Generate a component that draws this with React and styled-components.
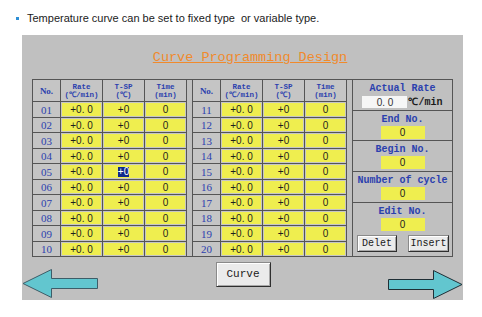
import React from "react";
import styled, { createGlobalStyle } from "styled-components";

const Global = createGlobalStyle`
  html, body { margin: 0; padding: 0; background: #fff; }
  body { width: 482px; height: 317px; overflow: hidden; }
  * { box-sizing: border-box; }
`;

const YELLOW = "#efee4f";
const LINE = "#555";
const BLUE = "#2b3fae";
const GRAY = "#c0c0c0";

const Page = styled.div`
  width: 482px;
  height: 317px;
  display: flex;
  flex-direction: column;
`;

const Caption = styled.div`
  height: 35px;
  padding: 12px 0 0 16px;
  display: flex;
  align-items: flex-start;
  gap: 8px;
  font: 11px/13px "Liberation Sans", Arial, sans-serif;
  color: #1b1b1b;
  white-space: pre;
`;

const Bullet = styled.span`
  width: 3px;
  height: 3px;
  margin-top: 5px;
  background: #2d8fd6;
`;

const Panel = styled.div`
  margin-left: 22px;
  width: 441px;
  height: 265px;
  background: ${GRAY};
  padding-top: 15px;
  display: flex;
  flex-direction: column;
`;

const Title = styled.div`
  text-align: center;
  padding-left: 15px;
  font: 13.5px/16px "Liberation Mono", monospace;
  color: #f08a2c;
  text-decoration: underline;
  text-underline-offset: 1px;
  margin-bottom: 13px;
`;

const Board = styled.div`
  margin: 0 10px;
  height: 178px;
  border: 1px solid ${LINE};
  display: flex;
`;

const DataGrid = styled.div`
  display: grid;
  grid-template-columns: 28px 42px 42px 42px;
  grid-template-rows: 21px repeat(5, 16px 15px);
`;

const Gap = styled.div`
  width: 6px;
  border-right: 1px solid ${LINE};
`;

const Cell = styled.div`
  border-right: 1px solid ${LINE};
  border-top: ${(p) => (p.$head ? "none" : `1px solid ${LINE}`)};
  background: #c5c5c5;
  padding: ${(p) => (p.$fill ? "1px" : "0")};
  display: flex;
  flex-direction: column;
  align-items: center;
  justify-content: center;
  color: ${BLUE};
`;

const HeadNo = styled.span`
  font: bold 9px/10px "Liberation Serif", serif;
`;

const HeadText = styled.span`
  font: bold 7.5px/8px "Liberation Mono", monospace;
  white-space: pre;
`;

const RowNo = styled.span`
  font: 11px/12px "Liberation Serif", serif;
`;

const Value = styled.div`
  width: 100%;
  height: 100%;
  background: ${YELLOW};
  display: flex;
  align-items: center;
  justify-content: center;
  font: 10px/11px "Liberation Sans", Arial, sans-serif;
  color: #1e1e1e;
  white-space: pre;
`;

const Selected = styled.span`
  background: #10298a;
  color: #fff;
  line-height: 10px;
`;

const Side = styled.div`
  width: 99px;
  display: flex;
  flex-direction: column;
`;

const Section = styled.div`
  height: ${(p) => (p.$h ? `${p.$h}px` : "auto")};
  flex: ${(p) => (p.$h ? "none" : "1")};
  border-bottom: ${(p) => (p.$last ? "none" : `1px solid ${LINE}`)};
  padding-top: 3px;
  display: flex;
  flex-direction: column;
  align-items: center;
  gap: 1px;
`;

const Label = styled.div`
  font: bold 10px/11px "Liberation Mono", monospace;
  color: ${BLUE};
  white-space: pre;
`;

const RateRow = styled.div`
  display: flex;
  align-items: center;
  gap: 1px;
  margin-top: 1px;
`;

const WhiteBox = styled.div`
  width: 45px;
  height: 12px;
  background: #f6f6f6;
  display: flex;
  align-items: center;
  justify-content: center;
  font: 10px/11px "Liberation Sans", Arial, sans-serif;
  color: #333;
  white-space: pre;
`;

const Unit = styled.span`
  font: bold 10px/11px "Liberation Mono", monospace;
  color: #1a1a1a;
`;

const YellowBox = styled.div`
  width: 44px;
  height: 13px;
  background: ${YELLOW};
  display: flex;
  align-items: center;
  justify-content: center;
  font: 10px/11px "Liberation Sans", Arial, sans-serif;
  color: #222;
`;

const ButtonRow = styled.div`
  align-self: stretch;
  display: flex;
  justify-content: space-between;
  padding: 0 3px 0 4px;
  margin-top: 3px;
`;

const Button = styled.div`
  width: ${(p) => p.$w}px;
  height: ${(p) => p.$h}px;
  background: #ebebeb;
  border: 1px solid;
  border-color: #8a8a8a #2e2e2e #2e2e2e #8a8a8a;
  box-shadow: inset 1px 1px #fff, inset -1px -1px #a8a8a8;
  display: flex;
  align-items: center;
  justify-content: center;
  font: ${(p) => p.$fs}px/1 "Liberation Mono", monospace;
  color: #1a1a1a;
`;

const BottomRow = styled.div`
  margin-top: 5px;
  display: flex;
  justify-content: space-between;
  align-items: flex-start;
`;

const ArrowSvg = styled.svg`
  display: block;
  margin-top: ${(p) => p.$top}px;
`;

const LeftArrow = () => (
  <ArrowSvg $top={7} width="76" height="30" viewBox="0 0 76 30">
    <polygon
      points="1,14.5 29.5,0.5 29.5,9.5 75.5,9.5 75.5,19.5 29.5,19.5 29.5,28.5"
      fill="#62c6cf"
      stroke="#3d5d68"
      strokeWidth="1"
    />
  </ArrowSvg>
);

const RightArrow = () => (
  <ArrowSvg $top={8} width="75" height="30" viewBox="0 0 75 30">
    <polygon
      points="0.5,9.5 45.5,9.5 45.5,0.5 74,14.5 45.5,28.5 45.5,19.5 0.5,19.5"
      fill="#62c6cf"
      stroke="#1f2f36"
      strokeWidth="1"
    />
  </ArrowSvg>
);

const pad = (n) => String(n).padStart(2, "0");

const Table = ({ start }) => {
  const rows = Array.from({ length: 10 }, (_, i) => start + i);
  return (
    <DataGrid>
      <Cell $head>
        <HeadNo>No.</HeadNo>
      </Cell>
      <Cell $head>
        <HeadText>Rate</HeadText>
        <HeadText>(℃/min)</HeadText>
      </Cell>
      <Cell $head>
        <HeadText>T-SP</HeadText>
        <HeadText>(℃)</HeadText>
      </Cell>
      <Cell $head>
        <HeadText>Time</HeadText>
        <HeadText>(min)</HeadText>
      </Cell>
      {rows.map((n) => (
        <React.Fragment key={n}>
          <Cell>
            <RowNo>{pad(n)}</RowNo>
          </Cell>
          <Cell $fill>
            <Value>+0. 0</Value>
          </Cell>
          <Cell $fill>
            <Value>{n === 5 ? <Selected>+0</Selected> : "+0"}</Value>
          </Cell>
          <Cell $fill>
            <Value>0</Value>
          </Cell>
        </React.Fragment>
      ))}
    </DataGrid>
  );
};

export default function App() {
  return (
    <Page>
      <Global />
      <Caption>
        <Bullet />
        <span>Temperature curve can be set to fixed type  or variable type.</span>
      </Caption>
      <Panel>
        <Title>Curve Programming Design</Title>
        <Board>
          <Table start={1} />
          <Gap />
          <Table start={11} />
          <Gap />
          <Side>
            <Section $h={31}>
              <Label>Actual Rate</Label>
              <RateRow>
                <WhiteBox>0. 0</WhiteBox>
                <Unit>℃/min</Unit>
              </RateRow>
            </Section>
            <Section $h={30}>
              <Label>End No.</Label>
              <YellowBox>0</YellowBox>
            </Section>
            <Section $h={31}>
              <Label>Begin No.</Label>
              <YellowBox>0</YellowBox>
            </Section>
            <Section $h={31}>
              <Label>Number of cycle</Label>
              <YellowBox>0</YellowBox>
            </Section>
            <Section $last>
              <Label>Edit No.</Label>
              <YellowBox>0</YellowBox>
              <ButtonRow>
                <Button $w={40} $h={17} $fs={10}>Delet</Button>
                <Button $w={41} $h={17} $fs={10}>Insert</Button>
              </ButtonRow>
            </Section>
          </Side>
        </Board>
        <BottomRow>
          <LeftArrow />
          <Button $w={55} $h={25} $fs={11}>Curve</Button>
          <RightArrow />
        </BottomRow>
      </Panel>
    </Page>
  );
}
